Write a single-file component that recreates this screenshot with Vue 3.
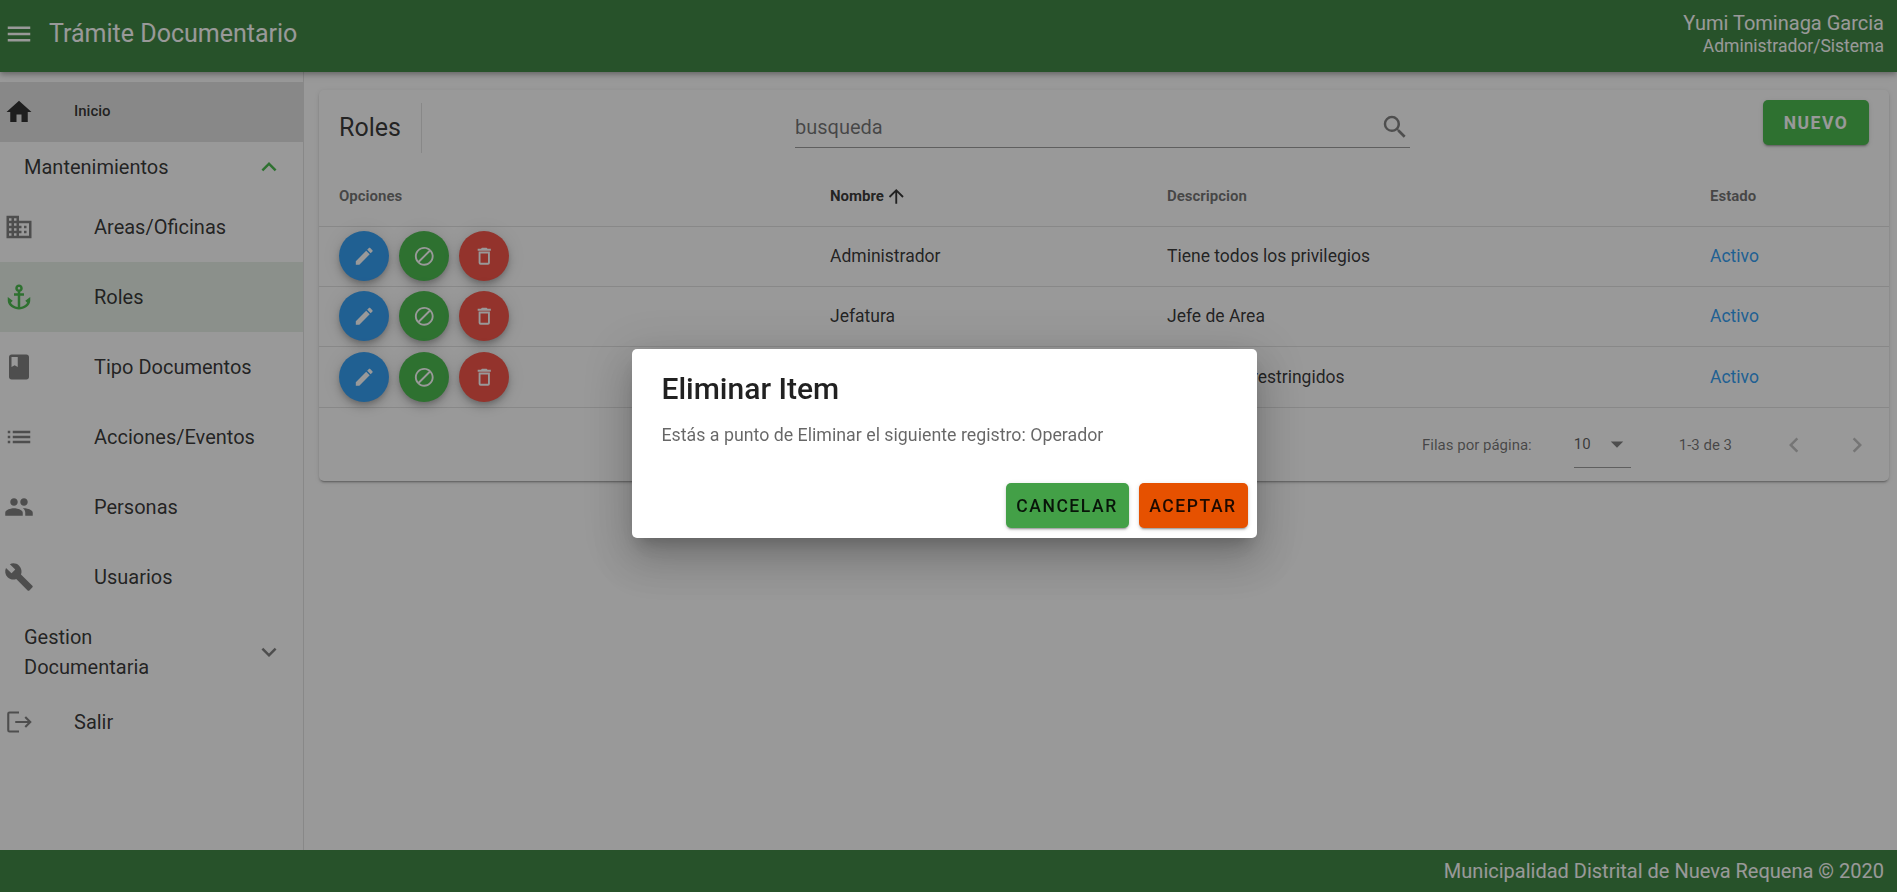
<script setup>
const P = {
  menu: 'M3,6H21V8H3V6M3,11H21V13H3V11M3,16H21V18H3V16Z',
  home: 'M10,20V14H14V20H19V12H22L12,3L2,12H5V20H10Z',
  up: 'M7.41,15.41L12,10.83L16.59,15.41L18,14L12,8L6,14L7.41,15.41Z',
  down: 'M7.41,8.58L12,13.17L16.59,8.58L18,10L12,16L6,10L7.41,8.58Z',
  domain: 'M12,7V3H2V21H22V7H12M6,19H4V17H6V19M6,15H4V13H6V15M6,11H4V9H6V11M6,7H4V5H6V7M10,19H8V17H10V19M10,15H8V13H10V15M10,11H8V9H10V11M10,7H8V5H10V7M20,19H12V17H14V15H12V13H14V11H12V9H20V19M18,11H16V13H18V11M18,15H16V17H18V15Z',
  anchor: 'M17 15l1.55 1.55c-.96 1.69-3.33 3.04-5.55 3.37V11h3V9h-3V7.82C14.16 7.4 15 6.3 15 5c0-1.65-1.35-3-3-3S9 3.35 9 5c0 1.3.84 2.4 2 2.82V9H8v2h3v8.92c-2.22-.33-4.59-1.68-5.55-3.37L7 15l-4-3v3c0 3.88 4.92 7 9 7s9-3.12 9-7v-3l-4 3zM12 4c.55 0 1 .45 1 1s-.45 1-1 1-1-.45-1-1 .45-1 1-1z',
  book: 'M18 2H6c-1.1 0-2 .9-2 2v16c0 1.1.9 2 2 2h12c1.1 0 2-.9 2-2V4c0-1.1-.9-2-2-2zM6 4h5v8l-2.5-1.5L6 12V4z',
  list: 'M3 13h2v-2H3v2zm0 4h2v-2H3v2zm0-8h2V7H3v2zm4 4h14v-2H7v2zm0 4h14v-2H7v2zM7 7v2h14V7H7z',
  people: 'M16 11c1.66 0 2.99-1.34 2.99-3S17.66 5 16 5c-1.66 0-3 1.34-3 3s1.34 3 3 3zm-8 0c1.66 0 2.99-1.34 2.99-3S9.66 5 8 5C6.34 5 5 6.34 5 8s1.34 3 3 3zm0 2c-2.33 0-7 1.17-7 3.5V19h14v-2.5c0-2.33-4.67-3.5-7-3.5zm8 0c-.29 0-.62.02-.97.05 1.16.84 1.97 1.97 1.97 3.45V19h6v-2.5c0-2.33-4.67-3.5-7-3.5z',
  wrench: 'M22.7 19l-9.1-9.1c.9-2.3.4-5-1.5-6.9-2-2-5-2.4-7.4-1.3L9 6 6 9 1.6 4.7C.4 7.1.9 10.1 2.9 12.1c1.9 1.9 4.6 2.4 6.9 1.5l9.1 9.1c.4.4 1 .4 1.4 0l2.3-2.3c.5-.4.5-1.1.1-1.4z',
  pencil: 'M20.71,7.04C21.1,6.65 21.1,6 20.71,5.63L18.37,3.29C18,2.9 17.35,2.9 16.96,3.29L15.12,5.12L18.87,8.87M3,17.25V21H6.75L17.81,9.93L14.06,6.18L3,17.25Z',
  cancel: 'M12 2C17.5 2 22 6.5 22 12S17.5 22 12 22 2 17.5 2 12 6.5 2 12 2M12 4C10.1 4 8.4 4.6 7.1 5.7L18.3 16.9C19.3 15.5 20 13.8 20 12C20 7.6 16.4 4 12 4M16.9 18.3L5.7 7.1C4.6 8.4 4 10.1 4 12C4 16.4 7.6 20 12 20C13.9 20 15.6 19.4 16.9 18.3Z',
  trash: 'M6,19A2,2 0 0,0 8,21H16A2,2 0 0,0 18,19V7H6V19M8,9H16V19H8V9M15.5,4L14.5,3H9.5L8.5,4H5V6H19V4H15.5Z',
  search: 'M9.5,3A6.5,6.5 0 0,1 16,9.5C16,11.11 15.41,12.59 14.44,13.73L14.71,14H15.5L20.5,19L19,20.5L14,15.5V14.71L13.73,14.44C12.59,15.41 11.11,16 9.5,16A6.5,6.5 0 0,1 3,9.5A6.5,6.5 0 0,1 9.5,3M9.5,5C7,5 5,7 5,9.5C5,12 7,14 9.5,14C12,14 14,12 14,9.5C14,7 12,5 9.5,5Z',
  arrowUp: 'M13,20H11V8L5.5,13.5L4.08,12.08L12,4.16L19.92,12.08L18.5,13.5L13,8V20Z',
  menuDown: 'M7,10L12,15L17,10H7Z',
  left: 'M15.41,16.58L10.83,12L15.41,7.41L14,6L8,12L14,18L15.41,16.58Z',
  right: 'M8.59,16.58L13.17,12L8.59,7.41L10,6L16,12L10,18L8.59,16.58Z',
}
const subItems = [
  { label: 'Areas/Oficinas', icon: P.domain },
  { label: 'Roles', icon: P.anchor, active: true },
  { label: 'Tipo Documentos', icon: P.book },
  { label: 'Acciones/Eventos', icon: P.list },
  { label: 'Personas', icon: P.people },
  { label: 'Usuarios', icon: P.wrench },
]
const rows = [
  { name: 'Administrador', desc: 'Tiene todos los privilegios' },
  { name: 'Jefatura', desc: 'Jefe de Area' },
  { name: 'Operador', desc: 'Privilegios restringidos' },
]
</script>

<template>
  <div class="app">
    <header class="topbar">
      <svg class="ic30 menu" viewBox="0 0 24 24"><path :d="P.menu" /></svg>
      <div class="brand">Trámite Documentario</div>
      <div class="user">
        <div class="user-name">Yumi Tominaga Garcia</div>
        <div class="user-role">Administrador/Sistema</div>
      </div>
    </header>

    <div class="middle">
      <nav class="sidebar">
        <div class="nav-row home">
          <svg class="ic30 nav-icon dark" viewBox="0 0 24 24"><path :d="P.home" /></svg>
          <span class="home-label">Inicio</span>
        </div>
        <div class="group group-open">
          <span class="group-title">Mantenimientos</span>
          <svg class="ic30 chev greenic" viewBox="0 0 24 24"><path :d="P.up" /></svg>
        </div>
        <div v-for="item in subItems" :key="item.label" class="nav-row sub" :class="{ active: item.active }">
          <svg class="ic30 nav-icon" viewBox="0 0 24 24"><path :d="item.icon" /></svg>
          <span class="sub-label">{{ item.label }}</span>
        </div>
        <div class="group group-two">
          <span class="group-title narrow">Gestion Documentaria</span>
          <svg class="ic30 chev" viewBox="0 0 24 24"><path :d="P.down" /></svg>
        </div>
        <div class="nav-row salir">
          <svg class="ic30 nav-icon" viewBox="0 0 24 24">
            <path class="exit" d="M12 4.4H4.4a1 1 0 0 0-1 1v13.2a1 1 0 0 0 1 1H12M9 12h12M17 8l4 4-4 4" />
          </svg>
          <span class="salir-label">Salir</span>
        </div>
      </nav>

      <main class="main">
        <section class="card">
          <div class="card-head">
            <div class="card-title">Roles</div>
            <div class="vdiv"></div>
            <div class="search">
              <span class="search-text">busqueda</span>
              <svg class="ic30 search-ic" viewBox="0 0 24 24"><path :d="P.search" /></svg>
            </div>
            <button class="nuevo">NUEVO</button>
          </div>

          <div class="tr th">
            <div class="cell">Opciones</div>
            <div class="cell sorted">Nombre<svg class="sort" viewBox="0 0 24 24"><path :d="P.arrowUp" /></svg></div>
            <div class="cell">Descripcion</div>
            <div class="cell">Estado</div>
          </div>
          <div v-for="r in rows" :key="r.name" class="tr td">
            <div class="cell actions">
              <span class="fab blue"><svg class="ic22" viewBox="0 0 24 24"><path :d="P.pencil" /></svg></span>
              <span class="fab green"><svg class="ic22 mirror" viewBox="0 0 24 24"><path :d="P.cancel" /></svg></span>
              <span class="fab red"><svg class="ic22" viewBox="0 0 24 24"><path :d="P.trash" /></svg></span>
            </div>
            <div class="cell">{{ r.name }}</div>
            <div class="cell">{{ r.desc }}</div>
            <div class="cell activo">Activo</div>
          </div>

          <div class="pager">
            <span>Filas por página:</span>
            <div class="select">
              <span>10</span>
              <svg class="ic30 sel-ic" viewBox="0 0 24 24"><path :d="P.menuDown" /></svg>
            </div>
            <span class="range">1-3 de 3</span>
            <svg class="ic30 pg" viewBox="0 0 24 24"><path :d="P.left" /></svg>
            <svg class="ic30 pg pg2" viewBox="0 0 24 24"><path :d="P.right" /></svg>
          </div>
        </section>
      </main>
    </div>

    <footer class="footer">Municipalidad Distrital de Nueva Requena © 2020</footer>

    <div class="overlay"></div>
    <div class="dialog-wrap">
      <div class="dialog">
        <div class="dialog-title">Eliminar Item</div>
        <div class="dialog-text">Estás a punto de Eliminar el siguiente registro: Operador</div>
        <div class="dialog-actions">
          <button class="dbtn cancelar">CANCELAR</button>
          <button class="dbtn aceptar">ACEPTAR</button>
        </div>
      </div>
    </div>
  </div>
</template>

<style scoped>
.app {
  height: 892px;
  display: flex;
  flex-direction: column;
  font-family: Roboto, "Liberation Sans", sans-serif;
  color: rgba(0, 0, 0, 0.87);
  background: #fff;
  overflow: hidden;
}
svg { display: block; flex: none; fill: currentColor; }
.ic30 { width: 30px; height: 30px; }
.ic22 { width: 22.5px; height: 22.5px; }
.mirror { transform: scaleX(-1); }

.topbar {
  height: 72px;
  flex: none;
  background: #2e7d32;
  color: #fff;
  display: flex;
  align-items: center;
  padding: 0 13px 0 4px;
  position: relative;
  z-index: 2;
  box-shadow: 0 2px 4px -1px rgba(0,0,0,.2), 0 4px 5px 0 rgba(0,0,0,.14), 0 1px 10px 0 rgba(0,0,0,.12);
}
.menu { margin-top: -4px; }
.brand { font-size: 25px; margin-left: 15px; margin-top: -4px; line-height: 32px; }
.user { margin-left: auto; text-align: right; margin-top: -4px; }
.user-name { font-size: 20px; line-height: 24px; }
.user-role { font-size: 17.5px; line-height: 23px; }

.middle { flex: 1; display: flex; min-height: 0; }
.sidebar {
  width: 304px;
  flex: none;
  box-sizing: border-box;
  border-right: 1px solid rgba(0, 0, 0, 0.12);
  padding-top: 10px;
}
.nav-row { display: flex; align-items: center; padding-left: 4px; }
.home { height: 60px; background: rgba(0, 0, 0, 0.12); }
.home-label { font-size: 15px; font-weight: 500; margin-left: 40px; margin-top: -2px; }
.dark { color: rgba(0, 0, 0, 0.87); }
.group { display: flex; align-items: center; padding: 0 19px 0 24px; font-size: 20px; justify-content: space-between; }
.group-open { height: 50px; }
.group-two { height: 80px; }
.group-title { line-height: 30px; }
.narrow { width: 180px; }
.chev { color: rgba(0, 0, 0, 0.54); }
.greenic { color: #3ab53e; }
.sub { height: 70px; }
.sub .nav-icon { color: rgba(0, 0, 0, 0.54); }
.sub-label { font-size: 20px; margin-left: 60px; }
.active { background: rgba(46, 125, 50, 0.12); }
.sub.active .nav-icon { color: #3ab53e; }
.salir { height: 60px; }
.salir .nav-icon { color: rgba(0, 0, 0, 0.54); }
.salir-label { font-size: 20px; margin-left: 40px; }
.exit { fill: none; stroke: currentColor; stroke-width: 1.7; }

.main { flex: 1; min-width: 0; padding: 18px 8px 0 15px; }
.card {
  background: #fff;
  border-radius: 5px;
  box-shadow: 0 3px 1px -2px rgba(0,0,0,.2), 0 2px 2px 0 rgba(0,0,0,.14), 0 1px 5px 0 rgba(0,0,0,.12);
}
.card-head { height: 76px; display: flex; align-items: center; padding: 0 20px 0 20px; box-sizing: border-box; }
.card-title { font-size: 25px; width: 82px; margin-top: -2px; }
.vdiv { width: 1px; height: 50px; background: rgba(0, 0, 0, 0.12); }
.search {
  margin-left: 373px;
  width: 615px;
  height: 38px;
  margin-top: 2px;
  box-sizing: border-box;
  border-bottom: 1px solid rgba(0, 0, 0, 0.42);
  display: flex;
  align-items: center;
  justify-content: space-between;
  padding-bottom: 3px;
}
.search-text { font-size: 20px; color: rgba(0, 0, 0, 0.6); }
.search-ic { color: rgba(0, 0, 0, 0.54); }
.nuevo {
  margin-left: auto;
  margin-top: -11px;
  width: 106px;
  height: 45px;
  border: 0;
  border-radius: 5px;
  background: #3ab53e;
  color: #fff;
  font: 700 17.5px Roboto, sans-serif;
  letter-spacing: 1.5px;
  box-shadow: 0 3px 1px -2px rgba(0,0,0,.2), 0 2px 2px 0 rgba(0,0,0,.14), 0 1px 5px 0 rgba(0,0,0,.12);
}

.tr { display: grid; grid-template-columns: 491px 337px 543px 1fr; }
.cell { padding-left: 20px; display: flex; align-items: center; }
.th { height: 61px; font-size: 15px; font-weight: 700; color: rgba(0, 0, 0, 0.6); border-bottom: 1px solid rgba(0, 0, 0, 0.12); box-sizing: border-box; }
.sorted { color: rgba(0, 0, 0, 0.87); }
.sort { width: 22.5px; height: 22.5px; margin-left: 1px; }
.td { height: 60px; padding-bottom: 1px; font-size: 17.5px; border-bottom: 1px solid rgba(0, 0, 0, 0.12); box-sizing: border-box; }
.td:nth-child(5) { height: 61px; padding-bottom: 0; }
.actions { gap: 10px; }
.fab {
  width: 50px;
  height: 50px;
  border-radius: 50%;
  color: #fff;
  display: flex;
  align-items: center;
  justify-content: center;
  box-shadow: 0 3px 5px -1px rgba(0,0,0,.2), 0 6px 10px 0 rgba(0,0,0,.14), 0 1px 18px 0 rgba(0,0,0,.12);
}
.blue { background: #2196f3; }
.green { background: #3ab53e; }
.red { background: #f44336; }
.activo { color: #2196f3; }

.pager {
  height: 73px;
  display: flex;
  align-items: center;
  font-size: 15px;
  color: rgba(0, 0, 0, 0.6);
  padding-left: 1103px;
}
.select {
  width: 57px;
  height: 42px;
  margin-left: 42px;
  box-sizing: border-box;
  border-bottom: 1px solid rgba(0, 0, 0, 0.42);
  display: flex;
  align-items: center;
  margin-top: 5px;
  padding-bottom: 5px;
  color: rgba(0, 0, 0, 0.7);
}
.sel-ic { margin-left: 11px; color: rgba(0, 0, 0, 0.54); }
.range { margin-left: 48px; }
.pg { color: rgba(0, 0, 0, 0.26); margin-left: 46.5px; }
.pg2 { margin-left: 33px; }

.footer {
  height: 42px;
  flex: none;
  background: #2e7d32;
  color: #fff;
  font-size: 20px;
  display: flex;
  align-items: center;
  justify-content: flex-end;
  padding-right: 13px;
}

.overlay { position: fixed; inset: 0; background: #212121; opacity: 0.46; z-index: 5; }
.dialog-wrap {
  position: fixed;
  inset: 0 8px 0 0;
  z-index: 6;
  display: flex;
  align-items: center;
  justify-content: center;
  padding-bottom: 5px;
}
.dialog {
  width: 625px;
  height: 189px;
  box-sizing: border-box;
  background: #fff;
  border-radius: 5px;
  padding: 20px 9.5px 0 29.5px;
  display: flex;
  flex-direction: column;
  box-shadow: 0 11px 15px -7px rgba(0,0,0,.2), 0 24px 38px 3px rgba(0,0,0,.14), 0 9px 46px 8px rgba(0,0,0,.12);
}
.dialog-title { font-size: 30px; font-weight: 500; line-height: 40px; }
.dialog-text { font-size: 17.8px; color: rgba(0, 0, 0, 0.6); margin-top: 13px; line-height: 25px; }
.dialog-actions { margin-top: auto; margin-bottom: 10px; display: flex; justify-content: flex-end; gap: 10px; }
.dbtn {
  height: 45px;
  border: 0;
  border-radius: 5px;
  font: 500 17.5px Roboto, sans-serif;
  letter-spacing: 1.56px;
  color: rgba(0, 0, 0, 0.87);
  box-shadow: 0 3px 1px -2px rgba(0,0,0,.2), 0 2px 2px 0 rgba(0,0,0,.14), 0 1px 5px 0 rgba(0,0,0,.12);
}
.cancelar { width: 123px; background: #43a047; }
.aceptar { width: 109px; background: #e65100; }
</style>
